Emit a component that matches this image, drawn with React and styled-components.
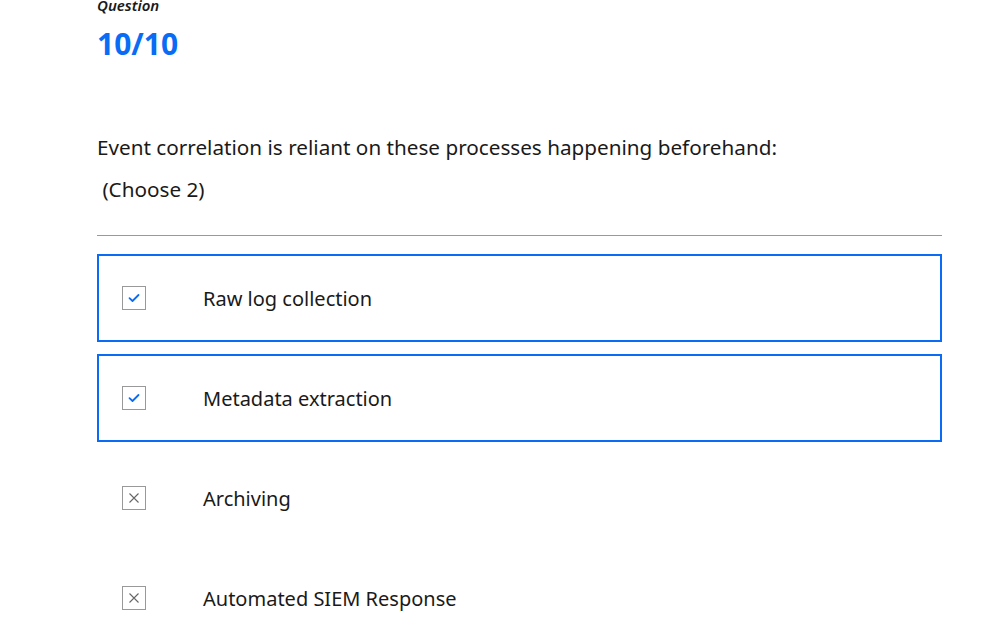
import React from "react";
import styled, { createGlobalStyle } from "styled-components";

const GlobalStyle = createGlobalStyle`
  body {
    margin: 0;
    background: #fff;
    font-family: "Noto Sans", "Open Sans", sans-serif;
    color: #1a1a1a;
  }
`;

const Page = styled.div`
  width: 845px;
  padding-left: 97px;
`;

const Label = styled.div`
  font-size: 15px;
  font-weight: 600;
  font-style: italic;
  line-height: 14px;
  margin-top: -2px;
  color: #1a1a1a;
`;

const Counter = styled.div`
  font-size: 30px;
  font-weight: 700;
  color: #0a6cf5;
  line-height: 36px;
  margin-top: 14px;
`;

const Prompt = styled.p`
  font-size: 20.7px;
  line-height: 28px;
  margin: 71px 0 0;
`;

const Hint = styled.p`
  font-size: 20.7px;
  line-height: 28px;
  margin: 14px 0 0;
`;

const Divider = styled.hr`
  border: none;
  border-top: 1px solid #999;
  margin: 32px 0 18px;
`;

const Options = styled.div`
  display: flex;
  flex-direction: column;
  gap: 12px;
`;

const Option = styled.div`
  height: 88px;
  box-sizing: border-box;
  border: 2px solid ${(p) => (p.selected ? "#0a6cf5" : "transparent")};
  display: flex;
  align-items: center;
  padding-left: 23px;
`;

const Box = styled.div`
  width: 24px;
  height: 24px;
  box-sizing: border-box;
  border: 1px solid #999;
  display: flex;
  align-items: center;
  justify-content: center;
  flex-shrink: 0;
`;

const OptionText = styled.span`
  font-size: 20px;
  margin-left: 57px;
`;

const Check = () => (
  <svg width="12" height="10" viewBox="0 0 12 10">
    <path d="M1.5 5.2 L4.5 8 L10.5 2" fill="none" stroke="#0a6cf5" strokeWidth="1.8" strokeLinecap="round" strokeLinejoin="round" />
  </svg>
);

const Cross = () => (
  <svg width="12" height="12" viewBox="0 0 12 12">
    <path d="M1.5 1.5 L10.5 10.5 M10.5 1.5 L1.5 10.5" fill="none" stroke="#666" strokeWidth="1.1" />
  </svg>
);

const options = [
  { text: "Raw log collection", selected: true },
  { text: "Metadata extraction", selected: true },
  { text: "Archiving", selected: false },
  { text: "Automated SIEM Response", selected: false },
];

export default function App() {
  return (
    <Page>
      <GlobalStyle />
      <Label>Question</Label>
      <Counter>10/10</Counter>
      <Prompt>Event correlation is reliant on these processes happening beforehand:</Prompt>
      <Hint>&nbsp;(Choose 2)</Hint>
      <Divider />
      <Options>
        {options.map((o) => (
          <Option key={o.text} selected={o.selected}>
            <Box>{o.selected ? <Check /> : <Cross />}</Box>
            <OptionText>{o.text}</OptionText>
          </Option>
        ))}
      </Options>
    </Page>
  );
}
